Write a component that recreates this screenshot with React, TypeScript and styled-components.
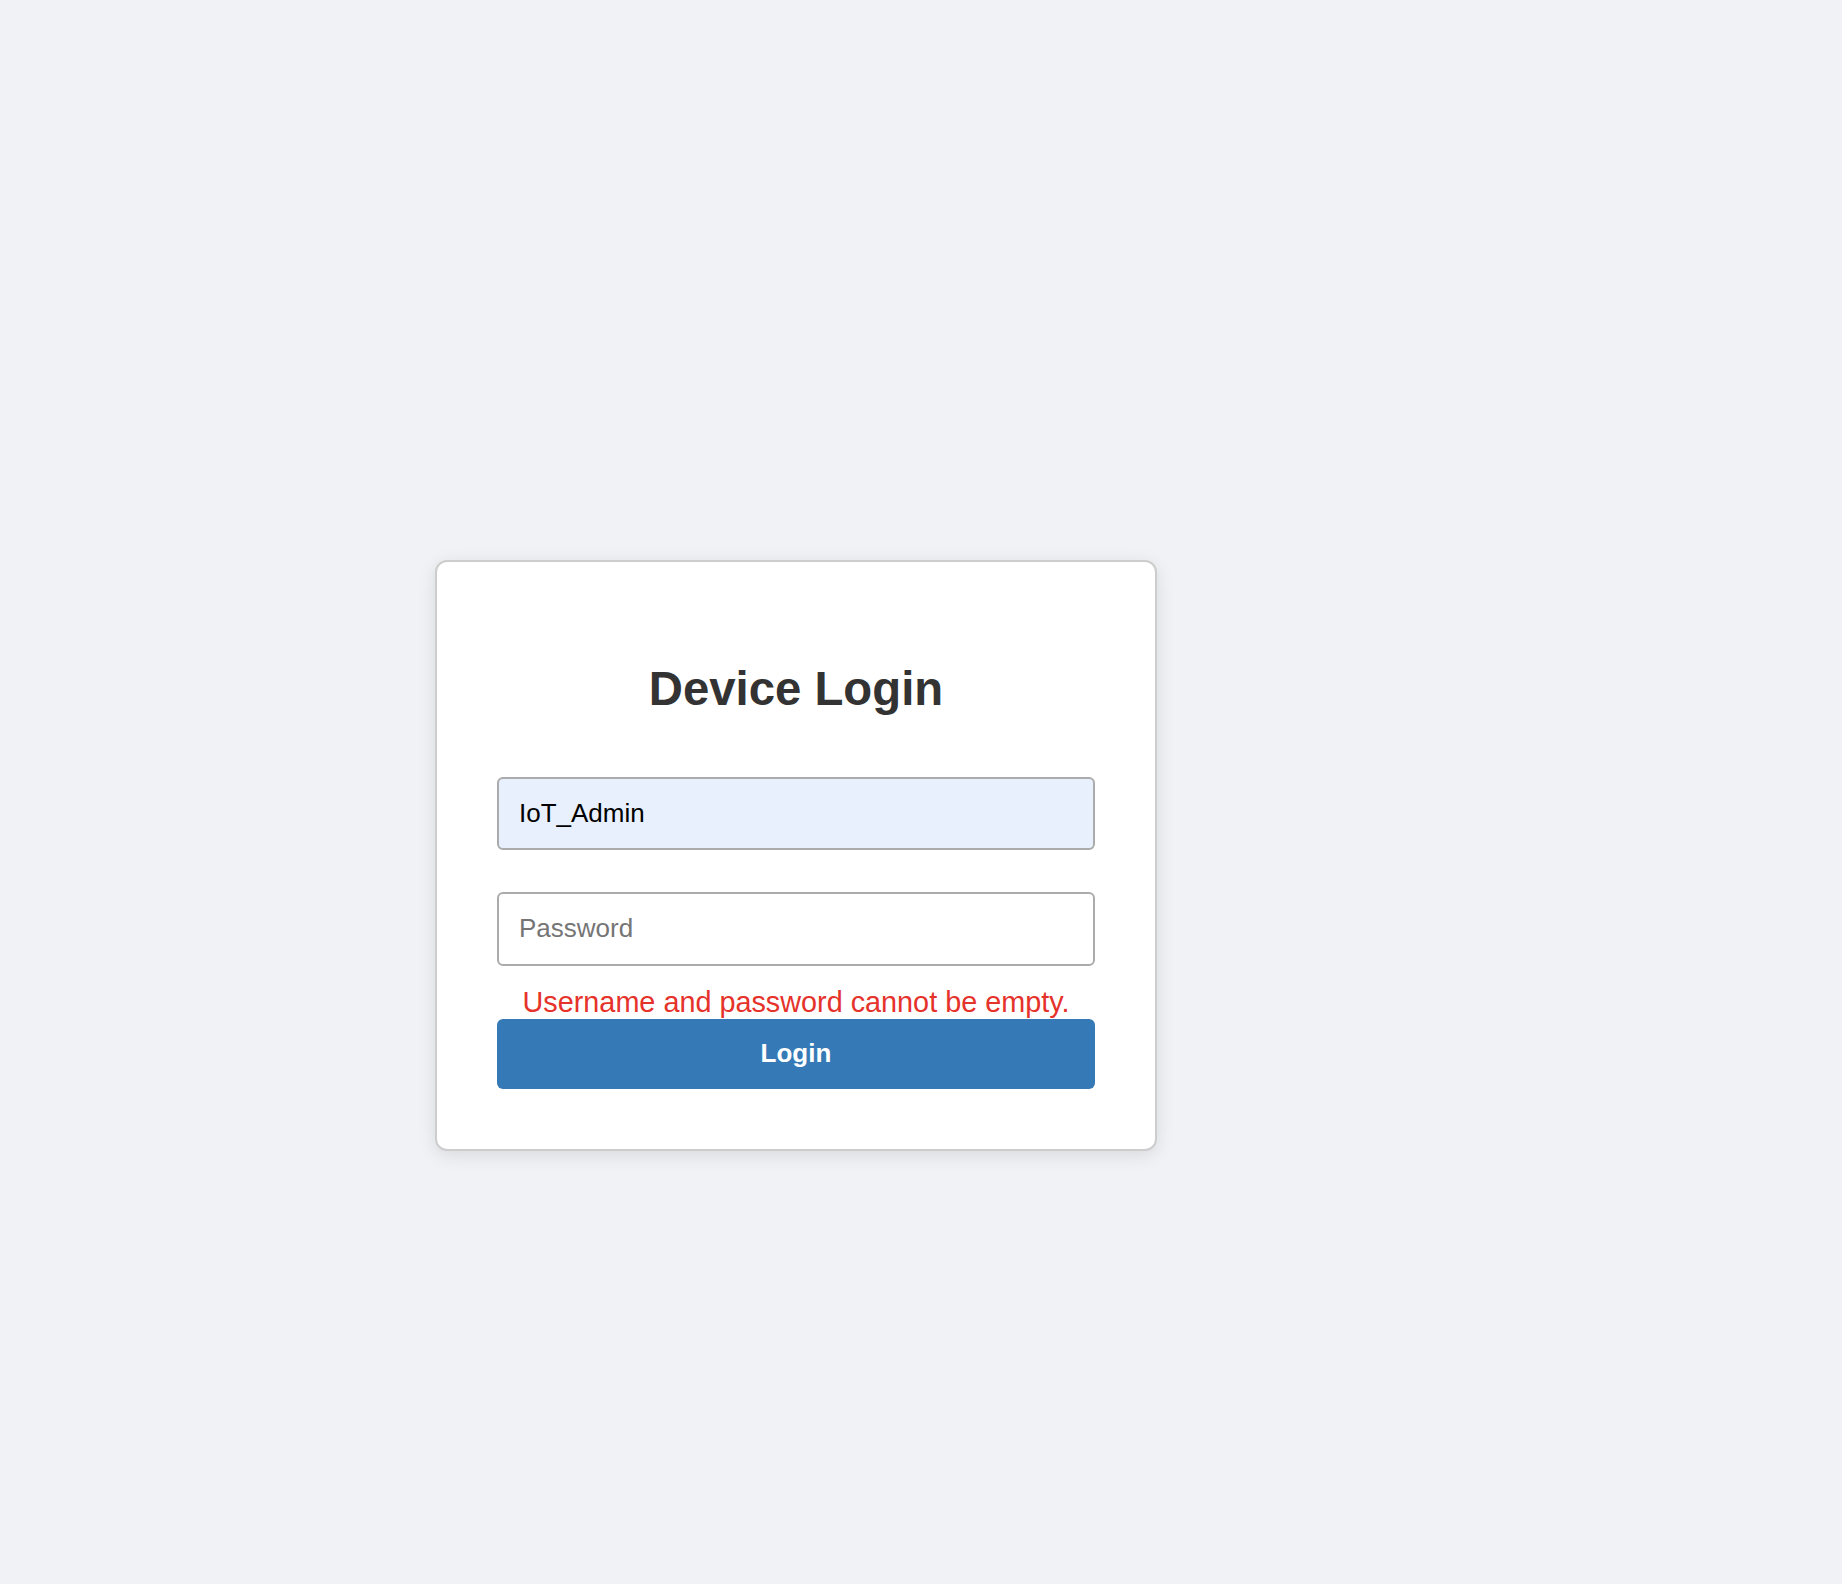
import React from "react";
import styled, { createGlobalStyle } from "styled-components";

const GlobalStyle = createGlobalStyle`
  html, body {
    margin: 0;
    padding: 0;
    background: #f0f2f5;
    font-family: "Liberation Sans", Arial, Helvetica, sans-serif;
  }
  * { box-sizing: border-box; }
`;

const Page = styled.div`
  min-height: 1584px;
  padding: 560px 0 0 435px;
  background: #f0f2f5;
`;

const Card = styled.form`
  width: 722px;
  height: 591px;
  background: #ffffff;
  border: 2px solid #cdcdcd;
  border-radius: 12px;
  box-shadow: 0 4px 18px rgba(0, 0, 0, 0.1);
  padding: 60px;
  display: flex;
  flex-direction: column;
`;

const Title = styled.h2`
  margin: 40px 0 0;
  font-size: 47.3px;
  font-weight: 700;
  color: #333333;
  text-align: center;
  line-height: 54px;
`;

const Input = styled.input<{ $filled?: boolean }>`
  display: block;
  width: 100%;
  height: 74px;
  margin-top: ${(p) => (p.$filled ? "61px" : "42px")};
  padding: 0 20px;
  border: 2px solid #ababab;
  border-radius: 6px;
  background: ${(p) => (p.$filled ? "#e8f0fe" : "#ffffff")};
  font-family: "Liberation Sans", Arial, Helvetica, sans-serif;
  font-size: 26px;
  color: #000000;
  outline: none;
  &::placeholder {
    color: #757575;
  }
`;

const ErrorText = styled.div`
  margin-top: 20px;
  font-size: 28.8px;
  line-height: 33px;
  color: #e5322a;
  text-align: center;
`;

const Button = styled.button`
  display: block;
  width: 100%;
  height: 71px;
  border: none;
  border-radius: 6px;
  background: #357ab6;
  color: #ffffff;
  font-family: "Liberation Sans", Arial, Helvetica, sans-serif;
  font-size: 26px;
  font-weight: 700;
  cursor: pointer;
`;

export default function App() {
  return (
    <>
      <GlobalStyle />
      <Page>
        <Card onSubmit={(e) => e.preventDefault()}>
          <Title>Device Login</Title>
          <Input $filled type="text" defaultValue="IoT_Admin" />
          <Input type="password" placeholder="Password" />
          <ErrorText>Username and password cannot be empty.</ErrorText>
          <Button type="submit">Login</Button>
        </Card>
      </Page>
    </>
  );
}
